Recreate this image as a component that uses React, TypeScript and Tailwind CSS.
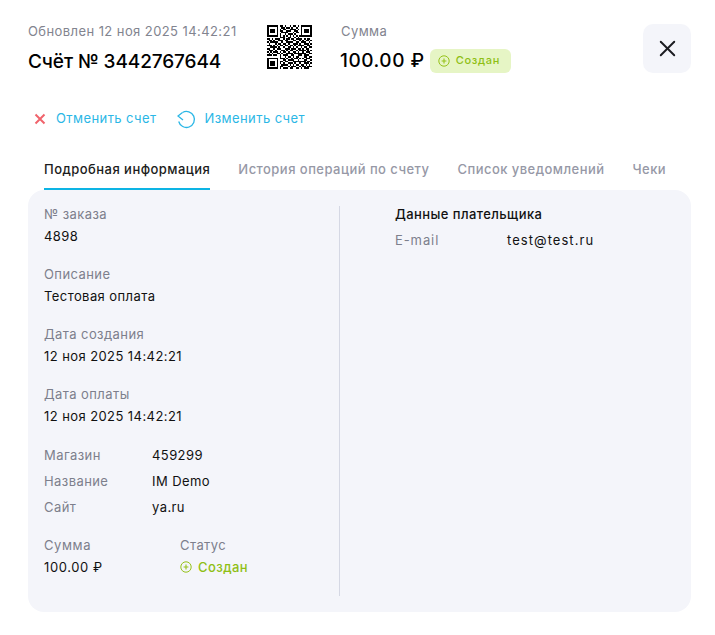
import { X } from "lucide-react";

const QR_ROWS = [
  "1111111011010010110101111111",
  "1000001001101101001001000001",
  "1011101010110011110101011101",
  "1011101011001110011001011101",
  "1011101001111000101101011101",
  "1000001010010111010001000001",
  "1111111010101010101011111111",
  "0000000011100110010100000000",
  "1101011100101101101111010110",
  "0110100111011000110010101101",
  "1011111001001111001101110010",
  "0100010110110100111010011101",
  "1110101011011011010111100110",
  "0011110100100110101001011011",
  "1100101110011101110110101100",
  "0111010001101011001011110101",
  "1010111010110100110100101110",
  "0101001101001111011111110011",
  "1110110010111001100111011100",
  "0000000010010110101100011011",
  "1111111011101001011010101110",
  "1000001000110111100100011001",
  "1011101011011000111111110110",
  "1011101010100111010010011101",
  "1011101001111010101101101010",
  "1000001011000101110010110111",
  "1111111010111011001101011100",
  "0000000000000000000000000000",
];

function QrCode() {
  return (
    <svg width="45" height="45" viewBox="0 0 28 27.5" shapeRendering="crispEdges" className="shrink-0">
      {QR_ROWS.flatMap((row, y) =>
        row.split("").map((c, x) => (c === "1" ? <rect key={`${x}-${y}`} x={x} y={y} width="1" height="1" fill="#000" /> : null))
      )}
    </svg>
  );
}

function CreatedIcon({ size = 12 }: { size?: number }) {
  return (
    <svg width={size} height={size} viewBox="0 0 12 12" fill="none" className="shrink-0">
      <circle cx="6" cy="6" r="5.2" stroke="#96c21a" strokeWidth="1" />
      <path d="M6 3.600v4.800M3.600 6h4.800" stroke="#96c21a" strokeWidth="1.100" />
    </svg>
  );
}

function Field({ label, value, className }: { label: string; value: string; className?: string }) {
  return (
    <div className={className}>
      <div className="text-[13px] leading-[18px] text-[#7d7f8c]">{label}</div>
      <div className="mt-[4px] text-[13px] leading-[18px] text-[#111]">{value}</div>
    </div>
  );
}

function ShopRow({ label, value }: { label: string; value: string }) {
  return (
    <div className="flex h-[26px] items-center text-[13px]">
      <span className="w-[108px] text-[#7d7f8c]">{label}</span>
      <span className="text-[#111]">{value}</span>
    </div>
  );
}

const tabs = ["История операций по счету", "Список уведомлений", "Чеки"];

export default function App() {
  return (
    <main className="h-[635px] w-[715px] overflow-hidden bg-white font-['Inter','Noto_Sans',sans-serif] tracking-[0.42px]">
      <header className="flex pl-[28px] pr-[24px] pt-[22px]">
        <div className="w-[239px]">
          <div className="text-[13px] leading-[18px] text-[#82848f]">Обновлен 12 ноя 2025 14:42:21</div>
          <h1 className="mt-[10px] text-[19px] font-medium leading-[24px] tracking-[-0.1px] text-black">Счёт № 3442767644</h1>
        </div>
        <div className="mt-[3px]">
          <QrCode />
        </div>
        <div className="ml-[29px]">
          <div className="text-[13px] leading-[18px] text-[#82848f]">Сумма</div>
          <div className="-ml-[1px] mt-[9px] flex items-center gap-[5px]">
            <span className="text-[19px] font-medium leading-[24px] tracking-[0.55px] text-black">100.00 ₽</span>
            <span className="flex h-[24px] items-center gap-[6px] rounded-[6px] bg-[#e6f5c5] px-[8px] pr-[11px] pb-[1px] text-[11px] font-medium tracking-[0.7px] text-[#8fbf14]">
              <CreatedIcon />
              Создан
            </span>
          </div>
        </div>
        <button className="ml-auto mt-[2px] flex h-[49px] w-[48px] items-center justify-center rounded-[10px] bg-[#f4f5fa] text-[#1b1c20]">
          <X size={27} strokeWidth={1.7} />
        </button>
      </header>

      <div className="mt-[33px] flex h-[24px] items-center pl-[33px] text-[13px] text-[#2bb7e6]">
        <svg width="14" height="14" viewBox="0 0 14 14" className="shrink-0">
          <path d="M2.500 2.500l9 9M11.500 2.500l-9 9" stroke="#f0646c" strokeWidth="2" />
        </svg>
        <span className="ml-[9px]">Отменить счет</span>
        <svg width="20" height="20" viewBox="0 0 20 20" fill="none" className="ml-[20px] shrink-0">
          <path d="M5.500 3.500A8 8 0 1 1 1.700 12.500" stroke="#2bb7e6" strokeWidth="1.300" />
          <path d="M5.500 3.500L1 7l5 4" stroke="#2bb7e6" strokeWidth="1.300" />
        </svg>
        <span className="ml-[8px]">Изменить счет</span>
      </div>

      <nav className="ml-[44px] mt-[26px] flex h-[33px] text-[13px] font-medium tracking-[0.46px]">
        <div className="border-b-2 border-[#0db4e4] pt-[3px] text-[#1b1c20]">Подробная информация</div>
        {tabs.map((t) => (
          <div key={t} className="ml-[28px] pt-[3px] text-[#9698a6]">
            {t}
          </div>
        ))}
      </nav>

      <section className="mx-[24px] ml-[28px] flex h-[422px] rounded-[16px] bg-[#f4f5fa] py-[16px]">
        <div className="w-[312px] border-r border-[#d5d8e4] pl-[16px]">
          <div className="flex flex-col gap-[20px] -mt-[1px]">
            <Field label="№ заказа" value="4898" />
            <Field label="Описание" value="Тестовая оплата" />
            <Field label="Дата создания" value="12 ноя 2025 14:42:21" />
            <Field label="Дата оплаты" value="12 ноя 2025 14:42:21" />
          </div>
          <div className="mt-[18px]">
            <ShopRow label="Магазин" value="459299" />
            <ShopRow label="Название" value="IM Demo" />
            <ShopRow label="Сайт" value="ya.ru" />
          </div>
          <div className="mt-[15px] flex">
            <Field label="Сумма" value="100.00 ₽" className="w-[136px] tracking-[0.6px]" />
            <div>
              <div className="text-[13px] leading-[18px] text-[#7d7f8c]">Статус</div>
              <div className="mt-[4px] flex items-center gap-[6px] text-[13px] font-medium leading-[18px] text-[#8fbf14]">
                <CreatedIcon />
                Создан
              </div>
            </div>
          </div>
        </div>
        <div className="-mt-[1px] pl-[55px]">
          <div className="text-[13px] font-medium leading-[18px] text-[#111]">Данные плательщика</div>
          <div className="mt-[8px] flex text-[13px] leading-[18px]">
            <span className="w-[112px] text-[#7d7f8c] tracking-[0.9px]">E-mail</span>
            <span className="text-[#111] tracking-[1.05px]">test@test.ru</span>
          </div>
        </div>
      </section>
    </main>
  );
}
